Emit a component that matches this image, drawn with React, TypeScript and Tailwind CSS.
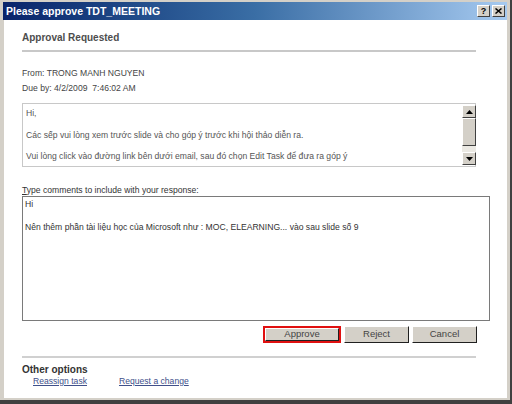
import React from "react";

const font = { fontFamily: '"Liberation Sans", Arial, sans-serif' };

function Arrow({ up }: { up?: boolean }) {
  return (
    <svg width="7" height="4" viewBox="0 0 7 4">
      {up ? <polygon points="3.5,0 7,4 0,4" fill="#000" /> : <polygon points="0,0 7,0 3.5,4" fill="#000" />}
    </svg>
  );
}

function ScrollBtn({ up }: { up?: boolean }) {
  return (
    <div className="h-[13px] w-[14px] bg-[#d4d0c8] border-t border-l border-t-white border-l-white border-r border-b border-r-[#404040] border-b-[#404040] flex items-center justify-center">
      <Arrow up={up} />
    </div>
  );
}

function WinButton({ label, focused }: { label: string; focused?: boolean }) {
  return (
    <div className={focused ? "border-2 border-[#e01010]" : ""}>
      <div
        className={`bg-[#d4d0c8] border-t border-l border-t-white border-l-white border-r border-b border-r-[#202020] border-b-[#202020] flex items-center justify-center text-[9.5px] text-[#444] ${
          focused ? "w-[74px] h-[13px]" : "w-[65px] h-[17px]"
        }`}
      >
        {label}
      </div>
    </div>
  );
}

export default function App() {
  return (
    <div style={font} className="w-[512px] h-[404px] bg-[#d4d0c8] pt-[2px] pl-[3px] pr-[3px] border-b-[4px] border-b-[#404040] border-r-2 border-r-[#404040] flex flex-col overflow-hidden">
      <div className="h-[18px] shrink-0 bg-gradient-to-r from-[#0a246a] via-[#3a6ea5] to-[#a6caf0] flex items-center justify-between pl-[3px] pr-[2px]">
        <span className="text-white font-bold text-[10.5px] leading-none">Please approve TDT_MEETING</span>
        <div className="flex gap-[2px]">
          <div className="w-[13px] h-[12px] bg-[#d4d0c8] border-t border-l border-t-white border-l-white border-r border-b border-r-[#404040] border-b-[#404040] flex items-center justify-center text-[9px] font-bold leading-none text-black">?</div>
          <div className="w-[13px] h-[12px] bg-[#d4d0c8] border-t border-l border-t-white border-l-white border-r border-b border-r-[#404040] border-b-[#404040] flex items-center justify-center">
            <svg width="7" height="6" viewBox="0 0 7 6">
              <path d="M0.5 0.5 L6.5 5.5 M6.5 0.5 L0.5 5.5" stroke="#000" strokeWidth="1.5" />
            </svg>
          </div>
        </div>
      </div>
      <div className="flex-1 bg-white ml-[1px] border-b-2 border-b-[#d4d0c8] pl-[18px] flex flex-col">
        <div className="mt-[11px] text-[10px] font-bold text-[#4d4d4d] leading-[14px]">Approval Requested</div>
        <div className="mt-[5px] w-[454px] h-[2px] bg-[#c8c8c8]" />
        <div className="mt-[14px] text-[8.6px] text-[#444] leading-[15px]">
          <div>From: TRONG MANH NGUYEN</div>
          <div>Due by: 4/2/2009&nbsp;&nbsp;7:46:02 AM</div>
        </div>
        <div className="mt-[7px] w-[454px] h-[64px] border border-[#c8c8c8] flex">
          <div className="flex-1 pl-[3px] pt-[4px] text-[8.6px] text-[#555] leading-[10.8px] overflow-hidden">
            <div>Hi,</div>
            <div>&nbsp;</div>
            <div>Các sếp vui lòng xem trước slide và cho góp ý trước khi hội thảo diễn ra.</div>
            <div>&nbsp;</div>
            <div>Vui lòng click vào đường link bên dưới email, sau đó chọn Edit Task để đưa ra góp ý</div>
          </div>
          <div className="w-[14px] mr-[-1px] pt-[1px] pb-[1px] flex flex-col">
            <ScrollBtn up />
            <div className="h-[28px] bg-[#d4d0c8] border-t border-l border-t-white border-l-white border-r border-b border-r-[#404040] border-b-[#404040]" />
            <div className="flex-1 bg-[#ebe9e3]" />
            <ScrollBtn />
          </div>
        </div>
        <div className="mt-[17px] text-[8.6px] text-[#333] leading-[12px]">
          <span className="underline">T</span>ype comments to include with your response:
        </div>
        <div className="mt-[0px] w-[468px] h-[125px] border border-[#7a7a7a] pl-[2px] pt-[2px] text-[8.6px] text-[#333] leading-[11.5px]">
          <div>Hi</div>
          <div>&nbsp;</div>
          <div>Nên thêm phần tài liệu học của Microsoft như : MOC, ELEARNING... vào sau slide số 9</div>
        </div>
        <div className="mt-[5px] w-[455px] flex justify-end gap-[3px] items-center">
          <WinButton label="Approve" focused />
          <WinButton label="Reject" />
          <WinButton label="Cancel" />
        </div>
        <div className="mt-[13px] w-[454px] h-[2px] bg-[#d0d0d0]" />
        <div className="mt-[6px] text-[10px] font-bold text-[#333] leading-[12px]">Other options</div>
        <div className="flex text-[8.6px] text-[#40508a] leading-[11px] pl-[11px]">
          <span className="underline">Reassign task</span>
          <span className="underline ml-[32px]">Request a change</span>
        </div>
      </div>
    </div>
  );
}
